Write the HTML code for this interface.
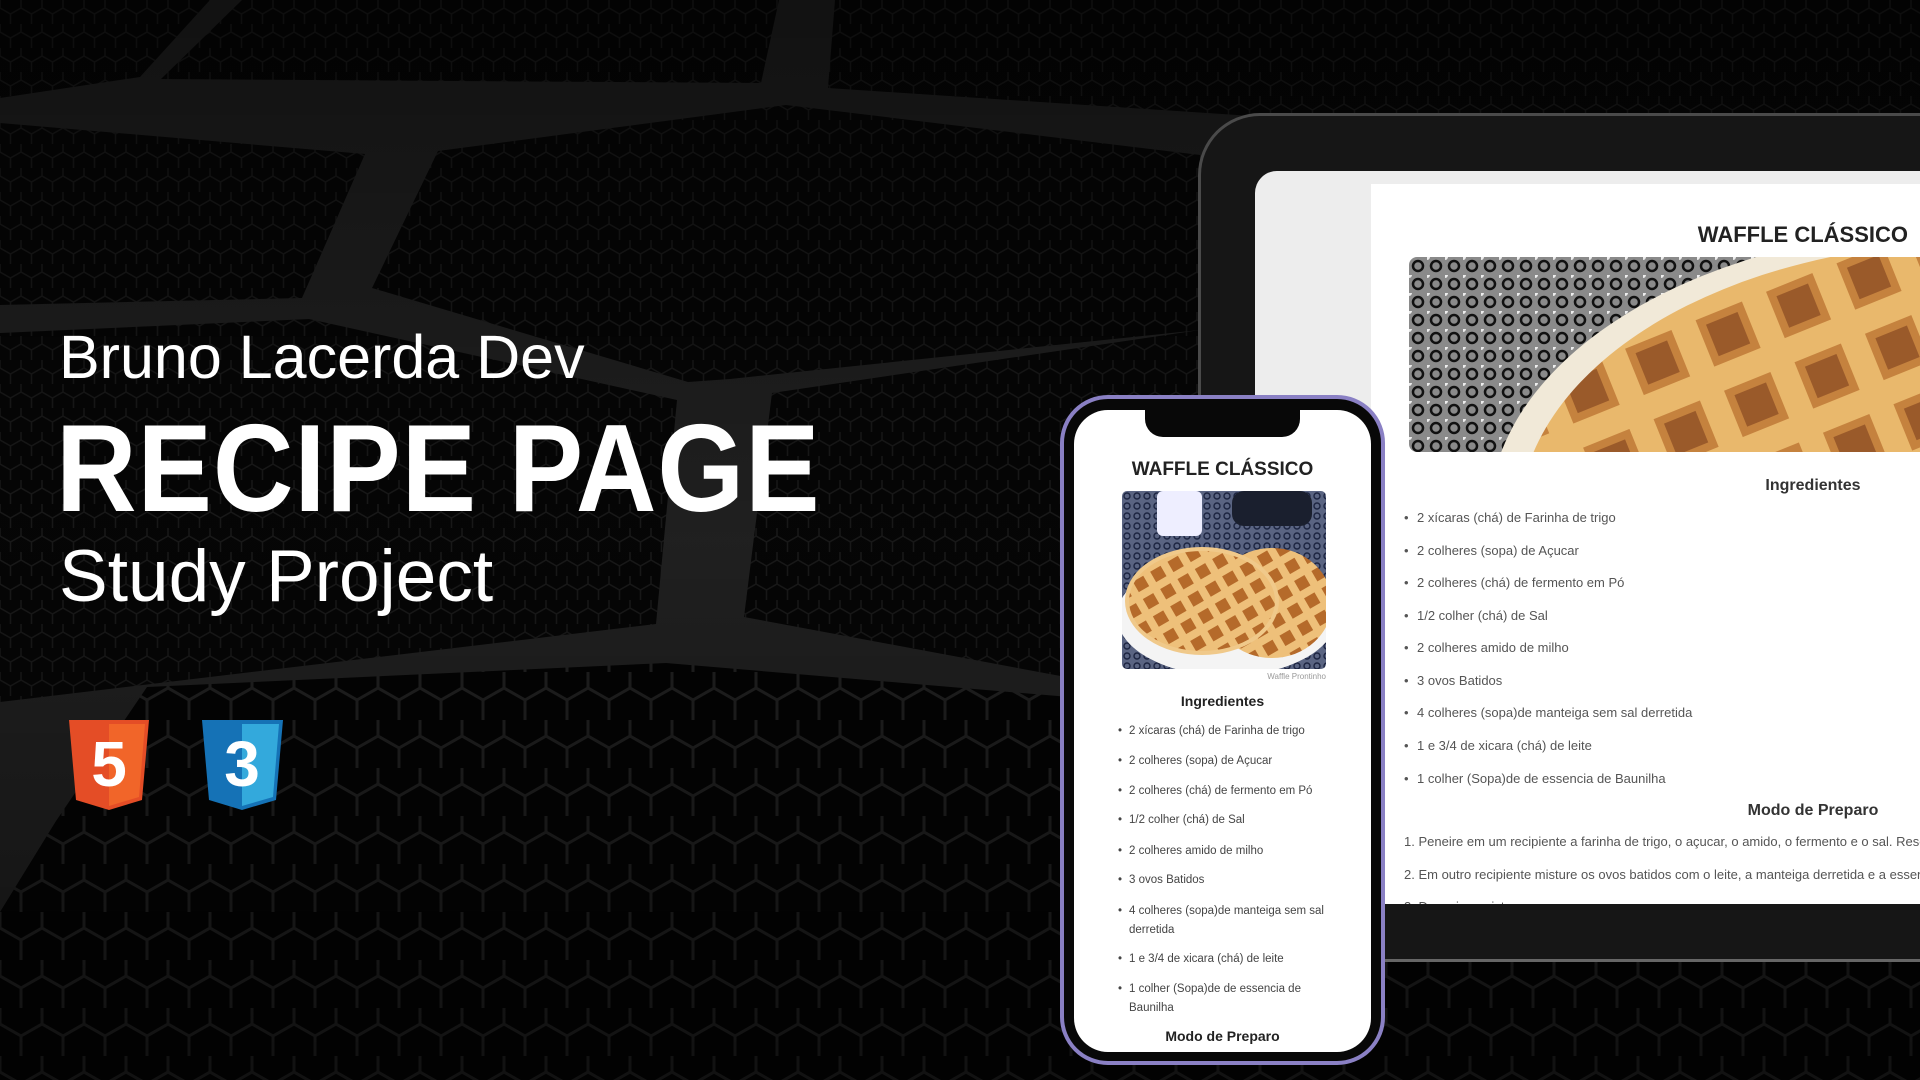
<!DOCTYPE html>
<html><head><meta charset="utf-8"><style>
*{margin:0;padding:0;box-sizing:border-box}
body{width:1920px;height:1080px;overflow:hidden;background:#1c1c1c;font-family:"Liberation Sans",Arial,sans-serif;position:relative}
.bg{position:absolute;left:0;top:0}
.t{position:absolute;color:#fff;white-space:nowrap}
.dev{left:59px;top:322px;font-size:61px;line-height:70px}
.rp{left:56px;top:404px;font-size:124px;font-weight:bold;line-height:130px;transform:scaleX(0.9);transform-origin:0 0;letter-spacing:1px}
.sp{left:59px;top:535px;font-size:73px;line-height:84px}
.tab{position:absolute;left:1198px;top:113px;width:800px;height:849px;background:#161616;border-radius:62px;border:3px solid #4a4a4a;border-bottom-color:#666}
.tscreen{position:absolute;left:1255px;top:171px;width:700px;height:733px;background:#ededed;border-radius:22px 0 0 0;overflow:hidden}
.tpanel{position:absolute;left:116px;top:13px;width:600px;height:720px;background:#fff;color:#555}
.tpanel h1{position:absolute;right:63px;top:38px;font-size:22px;color:#222;font-weight:bold;white-space:nowrap}
.timg{position:absolute;left:38px;top:73px;width:560px;height:195px;border-radius:8px 0 0 8px;overflow:hidden}
.th2{position:absolute;left:362px;width:160px;text-align:center;font-size:16px;font-weight:bold;color:#333;white-space:nowrap}
.tli{position:absolute;left:46px;font-size:13px;color:#555;white-space:nowrap}
.tli:before{content:"•";position:absolute;left:-13px;color:#555}
.tol{position:absolute;left:33px;font-size:13px;color:#555;white-space:nowrap}
.phone{position:absolute;left:1060px;top:395px;width:325px;height:670px;border-radius:48px;background:#080808;border:4px solid #8a80c4}
.pscreen{position:absolute;left:1074px;top:410px;width:297px;height:642px;background:#fff;border-radius:34px;overflow:hidden;color:#444}
.notch{position:absolute;left:71px;top:0;width:155px;height:27px;background:#080808;border-radius:0 0 18px 18px}
.ph1{position:absolute;left:0;width:297px;text-align:center;top:49px;font-size:19px;font-weight:bold;color:#222}
.pimg{position:absolute;left:48px;top:81px;width:204px;height:178px;border-radius:5px;overflow:hidden}
.cap{position:absolute;right:45px;top:262px;font-size:8px;color:#999}
.ph2{position:absolute;left:0;width:297px;text-align:center;font-size:14px;font-weight:bold;color:#222}
.pli{position:absolute;left:55px;width:200px;font-size:11.5px;line-height:18.5px;color:#444}
.pli:before{content:"•";position:absolute;left:-11px}
</style></head><body>
<svg class="bg" width="1920" height="1080" viewBox="0 0 1920 1080">
<defs>
<pattern id="hx" width="21" height="24" patternUnits="userSpaceOnUse">
<rect width="21" height="24" fill="#060606"/>
<path d="M0 0 V8 L10.5 14 V24 M10.5 14 L21 8 V0" fill="none" stroke="#1b1b1b" stroke-width="1.5"/>
</pattern>
<pattern id="hxb" width="42" height="48" patternUnits="userSpaceOnUse">
<rect width="42" height="48" fill="#040404"/>
<path d="M0 0 V16 L21 28 V48 M21 28 L42 16 V0" fill="none" stroke="#232323" stroke-width="3"/>
</pattern>
<linearGradient id="sh" x1="0" y1="0" x2="0" y2="1"><stop offset="0" stop-color="#000" stop-opacity=".5"/><stop offset=".5" stop-color="#000" stop-opacity=".1"/><stop offset="1" stop-color="#000" stop-opacity=".5"/></linearGradient>
</defs>
<rect width="1920" height="1080" fill="#232323"/>
<g fill="url(#hx)">
<polygon points="0,0 210,0 140,77 0,98"/>
<polygon points="242,0 779,0 761,83 161,79"/>
<polygon points="835,0 1920,0 1920,160 828,88"/>
<polygon points="0,123 365,154 302,298 0,305"/>
<polygon points="372,288 438,151 786,105 1200,155 1200,330 730,379 688,382"/>
<polygon points="0,333 309,319 677,400 656,624 0,702"/>
<polygon points="772,393 1200,330 1200,702 744,617"/>
</g>
<polygon points="56,821 147,687 666,663 1200,708 1920,740 1920,1080 0,1080 0,912" fill="url(#hxb)"/>
<rect width="1920" height="1080" fill="url(#sh)"/>
</svg>

<div class="t dev">Bruno Lacerda Dev</div>
<div class="t rp">RECIPE PAGE</div>
<div class="t sp">Study Project</div>

<svg style="position:absolute;left:69px;top:720px" width="80" height="90" viewBox="0 0 80 90">
<polygon points="0,0 80,0 73,80 40,90 7,80" fill="#e44d26"/>
<polygon points="40,4 76,4 70,77 40,86" fill="#f16529"/>
<text x="40" y="66" text-anchor="middle" font-family="Liberation Sans" font-weight="bold" font-size="64" fill="#fff">5</text>
</svg>
<svg style="position:absolute;left:202px;top:720px" width="81" height="90" viewBox="0 0 81 90">
<polygon points="0,0 81,0 74,80 40,90 7,80" fill="#1572b6"/>
<polygon points="40,4 77,4 71,77 40,86" fill="#33a9dc"/>
<text x="40" y="66" text-anchor="middle" font-family="Liberation Sans" font-weight="bold" font-size="64" fill="#fff">3</text>
</svg>

<div class="tab"></div>
<div class="tscreen">
 <div class="tpanel">
  <h1>WAFFLE CLÁSSICO</h1>
  <div class="timg">
   <svg width="560" height="195" viewBox="0 0 560 195">
    <defs><pattern id="lace" width="18" height="18" patternUnits="userSpaceOnUse"><rect width="18" height="18" fill="#8a8a8a"/><circle cx="9" cy="9" r="5" fill="none" stroke="#111" stroke-width="2.5"/><circle cx="0" cy="0" r="3" fill="#eee"/></pattern>
    <pattern id="wf" width="76" height="76" patternUnits="userSpaceOnUse" patternTransform="rotate(-22)"><rect width="76" height="76" fill="#e9b86c"/><rect x="14" y="14" width="50" height="50" fill="#c5823e"/><rect x="22" y="22" width="34" height="34" fill="#9a5a2a"/></pattern></defs>
    <rect width="560" height="195" fill="url(#lace)"/>
    <ellipse cx="560" cy="260" rx="480" ry="290" fill="#f1e9d8"/>
    <ellipse cx="570" cy="265" rx="460" ry="280" fill="url(#wf)"/>
   </svg>
  </div>
  <div class="th2" style="top:293px">Ingredientes</div>
  <div class="tli" style="top:326px">2 xícaras (chá) de Farinha de trigo</div>
  <div class="tli" style="top:359px">2 colheres (sopa) de Açucar</div>
  <div class="tli" style="top:391px">2 colheres (chá) de fermento em Pó</div>
  <div class="tli" style="top:424px">1/2 colher (chá) de Sal</div>
  <div class="tli" style="top:456px">2 colheres amido de milho</div>
  <div class="tli" style="top:489px">3 ovos Batidos</div>
  <div class="tli" style="top:521px">4 colheres (sopa)de manteiga sem sal derretida</div>
  <div class="tli" style="top:554px">1 e 3/4 de xicara (chá) de leite</div>
  <div class="tli" style="top:587px">1 colher (Sopa)de de essencia de Baunilha</div>
  <div class="th2" style="top:618px">Modo de Preparo</div>
  <div class="tol" style="top:650px">1. Peneire em um recipiente a farinha de trigo, o açucar, o amido, o fermento e o sal. Reserve.</div>
  <div class="tol" style="top:683px">2. Em outro recipiente misture os ovos batidos com o leite, a manteiga derretida e a essencia de baunilha.</div>
  <div class="tol" style="top:715px">3. Despeje a mistura</div>
 </div>
</div>

<div class="phone"></div>
<div class="pscreen">
 <div class="notch"></div>
 <div class="ph1">WAFFLE CLÁSSICO</div>
 <div class="pimg">
  <svg width="204" height="178" viewBox="0 0 204 178">
   <defs><pattern id="lace2" width="10" height="10" patternUnits="userSpaceOnUse"><rect width="10" height="10" fill="#5a6482"/><circle cx="5" cy="5" r="3" fill="none" stroke="#1c2440" stroke-width="1.4"/></pattern>
   <pattern id="wf2" width="20" height="20" patternUnits="userSpaceOnUse" patternTransform="rotate(-30)"><rect width="20" height="20" fill="#eec07a"/><rect x="4" y="4" width="12" height="12" fill="#b56a2a"/></pattern></defs>
   <rect width="204" height="178" fill="url(#lace2)"/>
   <rect x="35" y="0" width="45" height="45" fill="#eef" rx="6"/>
   <rect x="110" y="0" width="80" height="35" fill="#1a1f2e" rx="12"/>
   <ellipse cx="105" cy="125" rx="110" ry="60" fill="#f4f4f4"/>
   <ellipse cx="150" cy="112" rx="60" ry="55" fill="url(#wf2)"/>
   <ellipse cx="80" cy="110" rx="75" ry="52" fill="url(#wf2)" stroke="#f0c98a" stroke-width="4"/>
  </svg>
 </div>
 <div class="cap">Waffle Prontinho</div>
 <div class="ph2" style="top:283px">Ingredientes</div>
 <div class="pli" style="top:312px">2 xícaras (chá) de Farinha de trigo</div>
 <div class="pli" style="top:342px">2 colheres (sopa) de Açucar</div>
 <div class="pli" style="top:372px">2 colheres (chá) de fermento em Pó</div>
 <div class="pli" style="top:401px">1/2 colher (chá) de Sal</div>
 <div class="pli" style="top:432px">2 colheres amido de milho</div>
 <div class="pli" style="top:461px">3 ovos Batidos</div>
 <div class="pli" style="top:492px">4 colheres (sopa)de manteiga sem sal derretida</div>
 <div class="pli" style="top:540px">1 e 3/4 de xicara (chá) de leite</div>
 <div class="pli" style="top:570px">1 colher (Sopa)de de essencia de Baunilha</div>
 <div class="ph2" style="top:618px">Modo de Preparo</div>
</div>
</body></html>
